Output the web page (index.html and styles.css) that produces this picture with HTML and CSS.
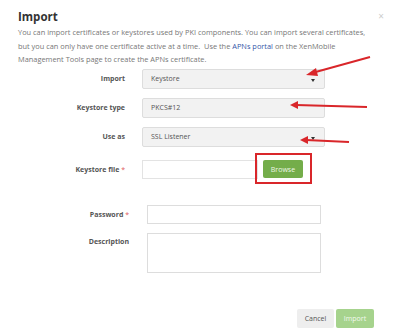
FILE: index.html
```html
<!DOCTYPE html>
<html lang="en">
<head>
    <meta charset="UTF-8">
    <title>Import</title>
    <link rel="stylesheet" href="styles.css">
</head>
<body>
    <div class="dialog">
        <span class="close">&times;</span>
        <h1>Import</h1>
        <p class="intro">You can import certificates or keystores used by PKI components. You can import several certificates, but you can only have one certificate active at a time.&nbsp; Use the <a href="#">APNs portal</a> on the XenMobile Management Tools page to create the APNs certificate.</p>

        <div class="form">
            <div class="row">
                <label>Import</label>
                <div class="select">Keystore<span class="caret"></span></div>
            </div>
            <div class="row">
                <label>Keystore type</label>
                <div class="select">PKCS#12</div>
            </div>
            <div class="row">
                <label>Use as</label>
                <div class="select">SSL Listener<span class="caret"></span></div>
            </div>
            <div class="row file-row">
                <label>Keystore file <span class="req">*</span></label>
                <div class="file-input"></div>
                <button class="btn browse">Browse</button>
            </div>
        </div>

        <div class="form form-lower">
            <div class="row">
                <label>Password <span class="req">*</span></label>
                <div class="text-input"></div>
            </div>
            <div class="row row-top">
                <label>Description</label>
                <div class="textarea"></div>
            </div>
        </div>

        <div class="actions">
            <button class="btn cancel">Cancel</button>
            <button class="btn submit">Import</button>
        </div>
    </div>

    <!-- annotation layer -->
    <svg class="marks" width="400" height="335" viewBox="0 0 400 335">
        <g stroke="#d9262a" stroke-width="2" fill="#d9262a">
            <line x1="370" y1="57" x2="312" y2="73"/>
            <polygon points="306,75 316,68 318,76" stroke="none"/>
            <line x1="367" y1="107" x2="296" y2="105"/>
            <polygon points="290,105 298,101 298,109" stroke="none"/>
            <line x1="349" y1="142" x2="306" y2="140"/>
            <polygon points="300,140 308,136 308,144" stroke="none"/>
            <rect x="256" y="154" width="55" height="29" fill="none"/>
        </g>
    </svg>
</body>
</html>
```

FILE: styles.css
```css
body {
    margin: 0;
    background: #fff;
    font-family: "Open Sans", "Liberation Sans", sans-serif;
    color: #555;
}

.dialog {
    position: relative;
    width: 400px;
    height: 335px;
    padding: 9px 0 0 18px;
    box-sizing: border-box;
}

h1 {
    margin: 0;
    font-size: 11.5px;
    font-weight: 700;
    line-height: 16px;
    color: #333;
}

.close {
    position: absolute;
    top: 9px;
    right: 16px;
    font-size: 10px;
    color: #ccc;
}

.intro {
    margin: 1px 0 0;
    width: 352px;
    font-size: 7.4px;
    line-height: 13.5px;
    color: #777;
}

.intro a {
    color: #3556a8;
    text-decoration: none;
}

.form {
    display: flex;
    flex-direction: column;
    gap: 9px;
    margin-top: 2px;
}

.row {
    display: flex;
    align-items: center;
}

.row label {
    width: 107px;
    text-align: right;
    font-size: 7px;
    font-weight: 700;
    color: #555;
    margin-right: 17px;
}

.req {
    color: #e05a5a;
    font-weight: 400;
}

.select {
    position: relative;
    width: 183px;
    height: 20px;
    box-sizing: border-box;
    border: 1px solid #ddd;
    border-radius: 2px;
    background: #f2f2f2;
    padding-left: 8px;
    font-size: 7px;
    line-height: 18px;
    color: #555;
}

.caret {
    position: absolute;
    right: 9px;
    top: 9px;
    border-left: 2px solid transparent;
    border-right: 2px solid transparent;
    border-top: 3px solid #333;
}

.file-row {
    margin-top: 4px;
}

.file-input {
    width: 116px;
    height: 19px;
    box-sizing: border-box;
    border: 1px solid #e3e3e3;
}

.btn {
    border: none;
    border-radius: 2px;
    font-family: "Open Sans", "Liberation Sans", sans-serif;
    font-size: 7px;
    padding: 0;
    height: 19px;
}

.browse {
    margin-left: 5px;
    width: 40px;
    height: 18px;
    background: #74ad4a;
    color: #eef7e6;
}

.form-lower {
    margin-top: 26px;
    padding-left: 2px;
}

.form-lower .row label {
    width: 109px;
    margin-right: 18px;
}

.row-top {
    align-items: flex-start;
}

.row-top label {
    margin-top: 4px;
}

.text-input,
.textarea {
    width: 174px;
    height: 19px;
    box-sizing: border-box;
    border: 1px solid #ddd;
}

.textarea {
    height: 40px;
}

.actions {
    display: flex;
    justify-content: flex-end;
    gap: 2px;
    margin: 36px 26px 0 0;
}

.cancel {
    width: 37px;
    background: #eee;
    color: #555;
}

.submit {
    width: 38px;
    background: #a6d38d;
    color: #f2f9ee;
}

.marks {
    position: absolute;
    top: 0;
    left: 0;
    pointer-events: none;
}
```
